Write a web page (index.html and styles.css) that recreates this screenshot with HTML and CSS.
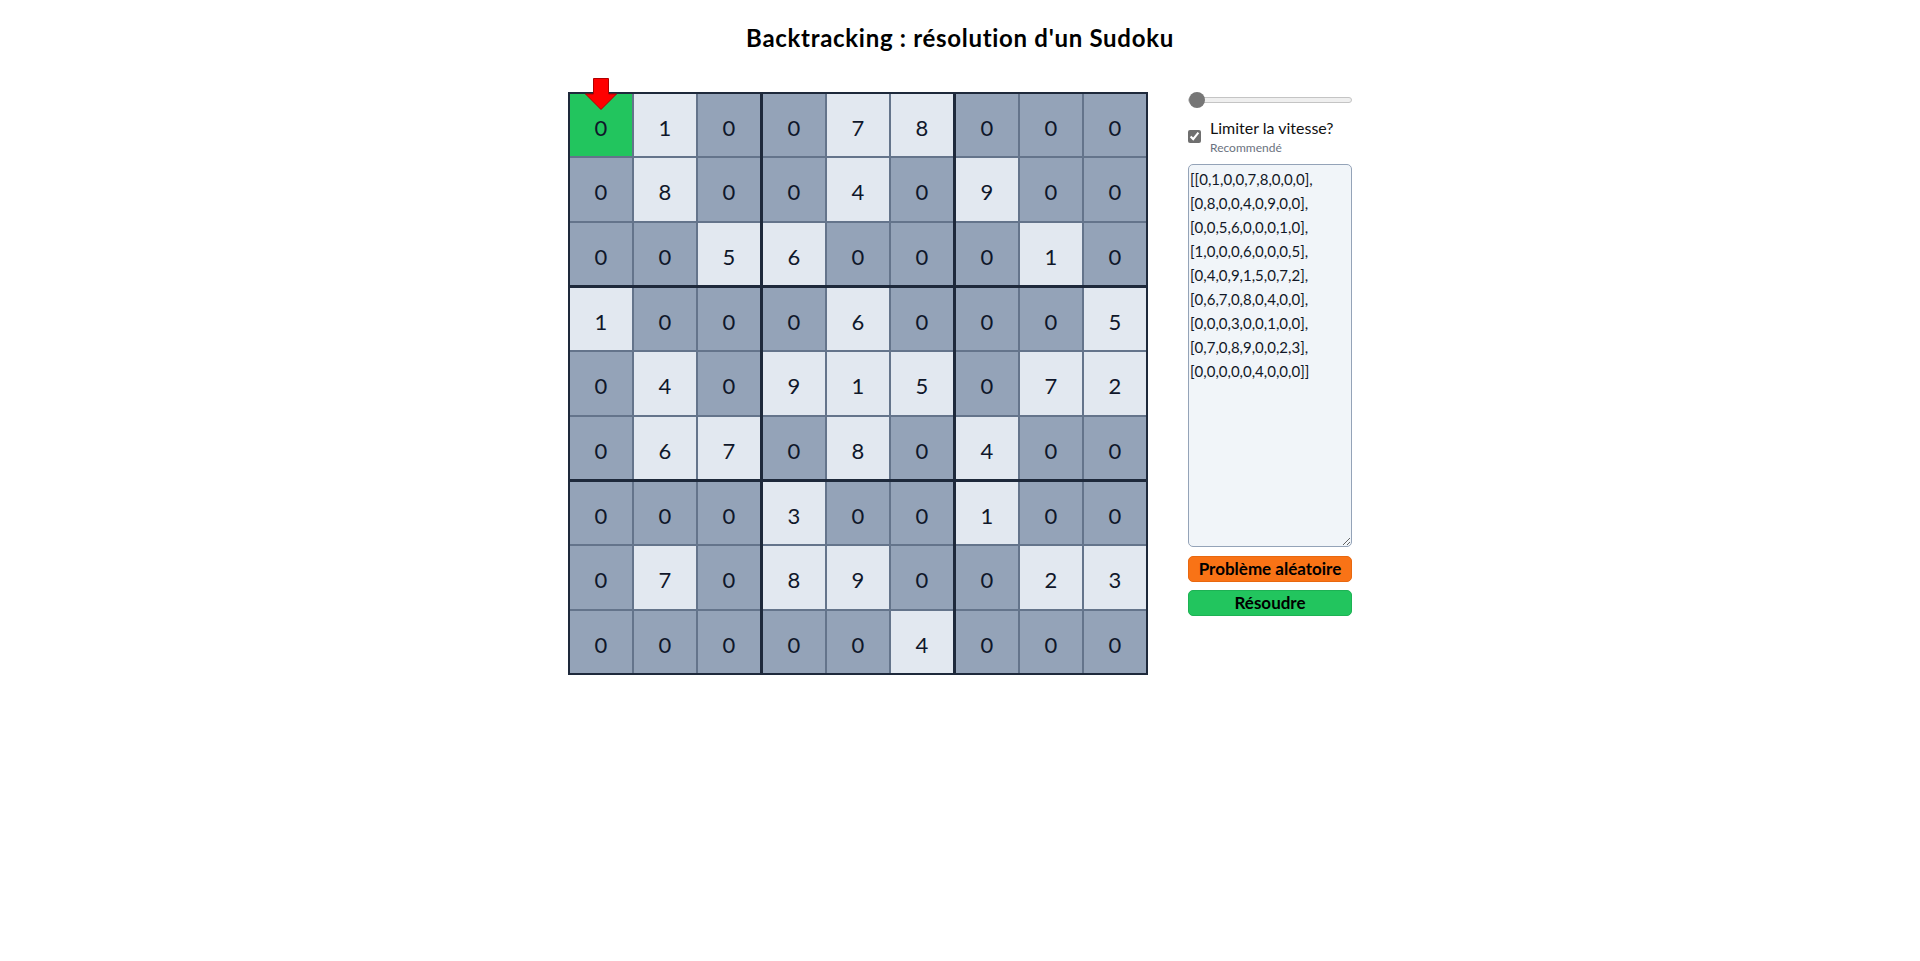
FILE: index.html
```html
<!DOCTYPE html>
<html lang="fr">
<head>
<meta charset="utf-8">
<title>Backtracking : résolution d'un Sudoku</title>
<link rel="stylesheet" href="styles.css">
</head>
<body>
<h1 class="title">Backtracking : résolution d'un Sudoku</h1>
<main class="layout">
  <div class="board">
    <div class="box">
      <div class="cell cell--current">0<svg class="arrow" viewBox="0 0 32 32" width="32" height="32"><polygon points="8.5,0.5 23.5,0.5 23.5,16 31.5,16 16,31.5 0.5,16 8.5,16" fill="#ff0000" stroke="#b00000" stroke-width="1"/></svg></div>
      <div class="cell cell--given">1</div>
      <div class="cell">0</div>
      <div class="cell">0</div>
      <div class="cell cell--given">8</div>
      <div class="cell">0</div>
      <div class="cell">0</div>
      <div class="cell">0</div>
      <div class="cell cell--given">5</div>
    </div>
    <div class="box">
      <div class="cell">0</div>
      <div class="cell cell--given">7</div>
      <div class="cell cell--given">8</div>
      <div class="cell">0</div>
      <div class="cell cell--given">4</div>
      <div class="cell">0</div>
      <div class="cell cell--given">6</div>
      <div class="cell">0</div>
      <div class="cell">0</div>
    </div>
    <div class="box">
      <div class="cell">0</div>
      <div class="cell">0</div>
      <div class="cell">0</div>
      <div class="cell cell--given">9</div>
      <div class="cell">0</div>
      <div class="cell">0</div>
      <div class="cell">0</div>
      <div class="cell cell--given">1</div>
      <div class="cell">0</div>
    </div>
    <div class="box">
      <div class="cell cell--given">1</div>
      <div class="cell">0</div>
      <div class="cell">0</div>
      <div class="cell">0</div>
      <div class="cell cell--given">4</div>
      <div class="cell">0</div>
      <div class="cell">0</div>
      <div class="cell cell--given">6</div>
      <div class="cell cell--given">7</div>
    </div>
    <div class="box">
      <div class="cell">0</div>
      <div class="cell cell--given">6</div>
      <div class="cell">0</div>
      <div class="cell cell--given">9</div>
      <div class="cell cell--given">1</div>
      <div class="cell cell--given">5</div>
      <div class="cell">0</div>
      <div class="cell cell--given">8</div>
      <div class="cell">0</div>
    </div>
    <div class="box">
      <div class="cell">0</div>
      <div class="cell">0</div>
      <div class="cell cell--given">5</div>
      <div class="cell">0</div>
      <div class="cell cell--given">7</div>
      <div class="cell cell--given">2</div>
      <div class="cell cell--given">4</div>
      <div class="cell">0</div>
      <div class="cell">0</div>
    </div>
    <div class="box">
      <div class="cell">0</div>
      <div class="cell">0</div>
      <div class="cell">0</div>
      <div class="cell">0</div>
      <div class="cell cell--given">7</div>
      <div class="cell">0</div>
      <div class="cell">0</div>
      <div class="cell">0</div>
      <div class="cell">0</div>
    </div>
    <div class="box">
      <div class="cell cell--given">3</div>
      <div class="cell">0</div>
      <div class="cell">0</div>
      <div class="cell cell--given">8</div>
      <div class="cell cell--given">9</div>
      <div class="cell">0</div>
      <div class="cell">0</div>
      <div class="cell">0</div>
      <div class="cell cell--given">4</div>
    </div>
    <div class="box">
      <div class="cell cell--given">1</div>
      <div class="cell">0</div>
      <div class="cell">0</div>
      <div class="cell">0</div>
      <div class="cell cell--given">2</div>
      <div class="cell cell--given">3</div>
      <div class="cell">0</div>
      <div class="cell">0</div>
      <div class="cell">0</div>
    </div>
  </div>

  <aside class="panel">
    <input class="speed" type="range" min="0" max="100" value="0">
    <label class="limit">
      <input class="limit__check" type="checkbox" checked>
      <span class="limit__text">
        <span class="limit__title">Limiter la vitesse?</span>
        <span class="limit__hint">Recommendé</span>
      </span>
    </label>
    <textarea class="grid-input" spellcheck="false">[[0,1,0,0,7,8,0,0,0],
[0,8,0,0,4,0,9,0,0],
[0,0,5,6,0,0,0,1,0],
[1,0,0,0,6,0,0,0,5],
[0,4,0,9,1,5,0,7,2],
[0,6,7,0,8,0,4,0,0],
[0,0,0,3,0,0,1,0,0],
[0,7,0,8,9,0,0,2,3],
[0,0,0,0,0,4,0,0,0]]</textarea>
    <button class="btn btn--random" type="button">Problème aléatoire</button>
    <button class="btn btn--solve" type="button">Résoudre</button>
  </aside>
</main>
</body>
</html>
```
FILE: styles.css
```css
* { box-sizing: border-box; }

html, body {
  margin: 0;
  padding: 0;
  background: #ffffff;
}

body {
  font-family: Lato, "Noto Sans", "DejaVu Sans", sans-serif;
  color: #111111;
}

.title {
  margin: 22px 0 0;
  font-size: 24px;
  line-height: 32px;
  font-weight: 700;
  letter-spacing: 0.7px;
  text-align: center;
  color: #000000;
}

.layout {
  display: flex;
  justify-content: center;
  align-items: flex-start;
  gap: 40px;
  margin-top: 38px;
}

.board {
  display: grid;
  grid-template-columns: repeat(3, auto);
  gap: 3px;
  padding: 2px;
  background: #1e293b;
}

.box {
  display: grid;
  grid-template-columns: 62px 62px 62px;
  grid-template-rows: 62px 63px 62px;
  gap: 2px;
  background: #64748b;
}

.cell {
  position: relative;
  display: flex;
  align-items: center;
  justify-content: center;
  padding-top: 4px;
  background: #94a3b8;
  font-size: 22px;
  color: #0f172a;
}

.cell--given { background: #e2e8f0; }
.cell--current { background: #22c55e; }

.arrow {
  position: absolute;
  top: -16px;
  left: 50%;
  margin-left: -16px;
  z-index: 2;
}

.panel {
  display: flex;
  flex-direction: column;
  width: 164px;
  margin-top: -2px;
}

.speed {
  -webkit-appearance: none;
  appearance: none;
  display: block;
  width: 164px;
  height: 16px;
  margin: 2px 0 0;
  background: transparent;
}

.speed::-webkit-slider-runnable-track {
  height: 6px;
  background: #efefef;
  border: 1px solid #c4c4c4;
  border-radius: 3px;
}

.speed::-webkit-slider-thumb {
  -webkit-appearance: none;
  appearance: none;
  width: 16px;
  height: 16px;
  margin-top: -6px;
  border-radius: 50%;
  background: #767676;
  border: none;
}

.limit {
  display: flex;
  align-items: center;
  gap: 9px;
  margin-top: 8px;
}

.limit__check {
  width: 13px;
  height: 13px;
  margin: 0;
  accent-color: #6f6f6f;
  flex: none;
}

.limit__text {
  display: flex;
  flex-direction: column;
}

.limit__title {
  font-size: 16px;
  line-height: 24px;
  color: #111111;
}

.limit__hint {
  font-size: 12px;
  line-height: 16px;
  color: #6b7280;
}

.grid-input {
  display: block;
  width: 164px;
  height: 383px;
  margin-top: 8px;
  padding: 2px 1px;
  border: 1px solid #94a3b8;
  border-radius: 5px;
  background: #f1f5f9;
  font-family: Lato, "Noto Sans", sans-serif;
  font-size: 15px;
  line-height: 24px;
  color: #111827;
  resize: vertical;
  white-space: pre;
  overflow: hidden;
}

.btn {
  display: block;
  width: 164px;
  height: 26px;
  padding: 0;
  border-radius: 5px;
  font-family: Lato, "Noto Sans", sans-serif;
  font-size: 17px;
  font-weight: 700;
  line-height: 24px;
  color: #000000;
  cursor: pointer;
}

.btn--random {
  margin-top: 9px;
  background: #f97316;
  border: 1px solid #e8680f;
}

.btn--solve {
  margin-top: 8px;
  background: #22c55e;
  border: 1px solid #1db254;
}
```
